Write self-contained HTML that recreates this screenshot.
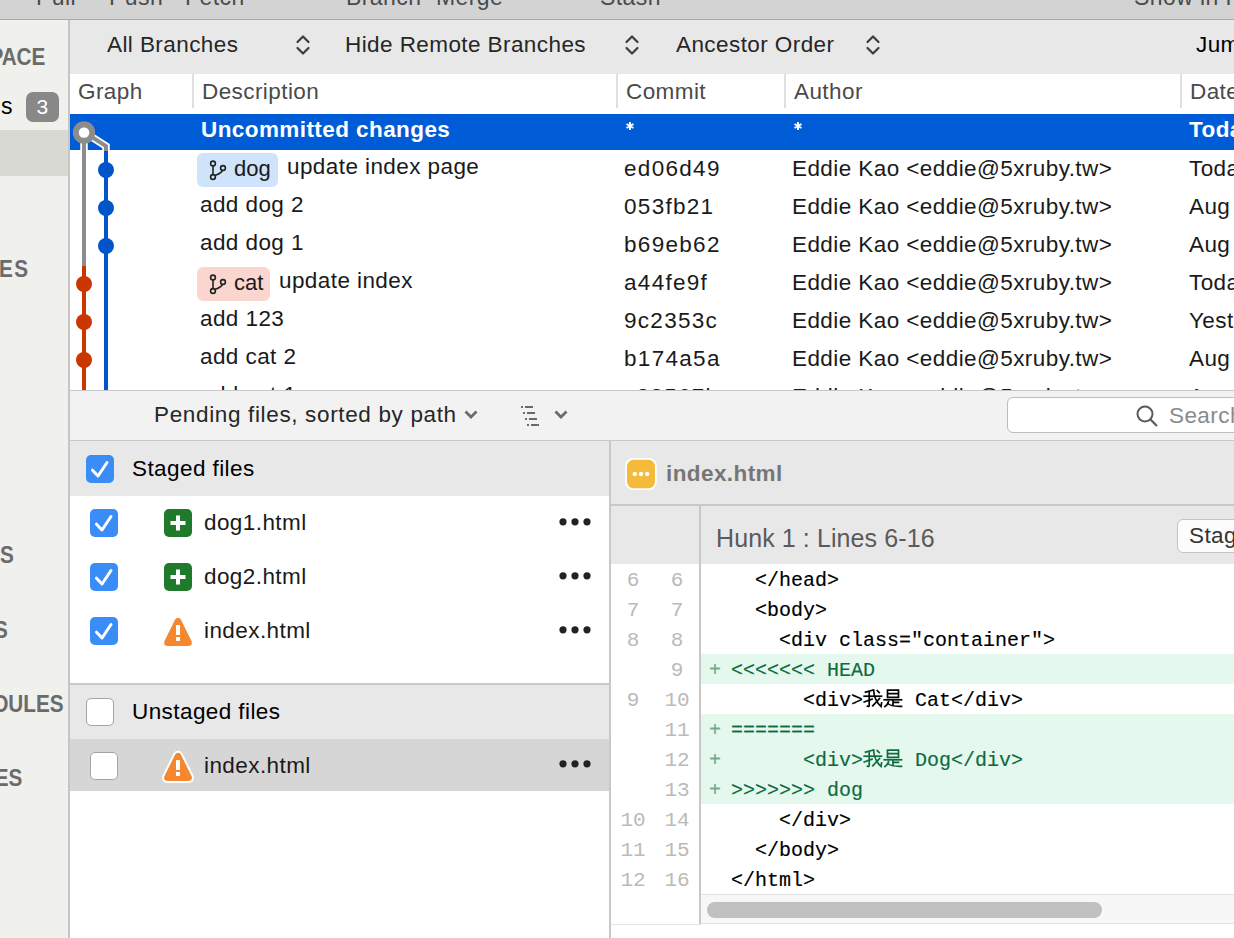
<!DOCTYPE html>
<html><head><meta charset="utf-8">
<style>
*{margin:0;padding:0;box-sizing:border-box}
html,body{width:1234px;height:938px;overflow:hidden;background:#fff}
body{position:relative;font-family:"Liberation Sans",sans-serif;font-size:22.5px;color:#1a1a1a;letter-spacing:0.42px}
.mono{letter-spacing:0}
.code{-webkit-text-stroke:0.15px currentColor}
.a{position:absolute;white-space:pre}
.mono{font-family:"Liberation Mono",monospace}
</style></head><body>

<!-- toolbar -->
<div class="a" style="left:0;top:0;width:1234px;height:19px;background:#d3d3d3"></div>
<div class="a" style="left:0;top:19px;width:1234px;height:1px;background:#a9a9a9"></div>
<div class="a" style="left:0;top:-16px;height:26px;line-height:26px;width:1234px;color:#4b4b4b;font-size:23px">
 <span class="a" style="top:0;left:36px">Pull</span>
 <span class="a" style="top:0;left:109px">Push</span>
 <span class="a" style="top:0;left:185px">Fetch</span>
 <span class="a" style="top:0;left:346px">Branch</span>
 <span class="a" style="top:0;left:436px">Merge</span>
 <span class="a" style="top:0;left:600px">Stash</span>
 <span class="a" style="top:0;left:1134px">Show in Finder</span>
</div>

<!-- sidebar -->
<div class="a" style="left:0;top:20px;width:68px;height:918px;background:#f0f0ed"></div>
<div class="a" style="left:68px;top:20px;width:2px;height:918px;background:#c6c6c6"></div>
<div class="a" style="left:0;top:130px;width:68px;height:46px;background:#d9d9d4"></div>


<!-- sidebar labels -->
<div class="a" style="right:1188.5px;top:43.0px;font-weight:bold;font-size:23px;color:#6b6b6b;line-height:28px;letter-spacing:0;transform:scaleX(0.9);transform-origin:100% 50%">WORKSPACE</div>
<div class="a" style="right:1221px;top:92px;font-size:23px;color:#000;line-height:28px">File Status</div>
<div class="a" style="left:26px;top:92px;width:33px;height:30px;border-radius:7px;background:#888;color:#fff;font-size:21px;line-height:30px;text-align:center">3</div>
<div class="a" style="right:1205.0px;top:254.8px;font-weight:bold;font-size:23px;color:#6b6b6b;line-height:28px;letter-spacing:1.5px;transform:scaleX(0.9);transform-origin:100% 50%">BRANCHES</div>

<!-- filter bar -->
<div class="a" style="left:70px;top:20px;width:1164px;height:54px;background:#e8e8e8"></div>
<div class="a" style="left:107px;top:30px;line-height:30px;color:#262626">All Branches</div>
<div class="a" style="left:345px;top:30px;line-height:30px;color:#262626">Hide Remote Branches</div>
<div class="a" style="left:676px;top:30px;line-height:30px;color:#262626">Ancestor Order</div>
<div class="a" style="left:1196px;top:30px;line-height:30px;color:#000">Jump to:</div>
<svg class="a" style="left:295px;top:33px" width="16" height="24"><path d="M2.5 9 L8 3.5 L13.5 9 M2.5 15 L8 20.5 L13.5 15" fill="none" stroke="#3c3c3c" stroke-width="2.2" stroke-linecap="round" stroke-linejoin="round"/></svg>
<svg class="a" style="left:624px;top:33px" width="16" height="24"><path d="M2.5 9 L8 3.5 L13.5 9 M2.5 15 L8 20.5 L13.5 15" fill="none" stroke="#3c3c3c" stroke-width="2.2" stroke-linecap="round" stroke-linejoin="round"/></svg>
<svg class="a" style="left:865px;top:33px" width="16" height="24"><path d="M2.5 9 L8 3.5 L13.5 9 M2.5 15 L8 20.5 L13.5 15" fill="none" stroke="#3c3c3c" stroke-width="2.2" stroke-linecap="round" stroke-linejoin="round"/></svg>

<!-- table header -->
<div class="a" style="left:70px;top:74px;width:1164px;height:39px;background:#fff"></div>
<div class="a" style="left:78px;top:77px;line-height:30px;color:#4a4a4a">Graph</div>
<div class="a" style="left:202px;top:77px;line-height:30px;color:#4a4a4a">Description</div>
<div class="a" style="left:626px;top:77px;line-height:30px;color:#4a4a4a">Commit</div>
<div class="a" style="left:794px;top:77px;line-height:30px;color:#4a4a4a">Author</div>
<div class="a" style="left:1190px;top:77px;line-height:30px;color:#4a4a4a">Date</div>
<div class="a" style="left:192px;top:74px;width:2px;height:34px;background:#e0e0e0"></div>
<div class="a" style="left:616px;top:74px;width:2px;height:34px;background:#e0e0e0"></div>
<div class="a" style="left:784px;top:74px;width:2px;height:34px;background:#e0e0e0"></div>
<div class="a" style="left:1180px;top:74px;width:2px;height:34px;background:#e0e0e0"></div>

<!-- rows -->
<div class="a" style="left:70px;top:114px;width:1164px;height:36px;background:#005cd6"></div>
<div class="a" style="left:201px;top:116px;line-height:28px;color:#fff;font-weight:bold">Uncommitted changes</div>
<svg class="a" style="left:624px;top:120.2px" width="12" height="12"><g stroke="#fff" stroke-width="1.9" stroke-linecap="butt"><path d="M6 2V10M2.5 4L9.5 8M2.5 8L9.5 4"/></g></svg>
<svg class="a" style="left:792px;top:120.2px" width="12" height="12"><g stroke="#fff" stroke-width="1.9" stroke-linecap="butt"><path d="M6 2V10M2.5 4L9.5 8M2.5 8L9.5 4"/></g></svg>
<div class="a" style="left:1189px;top:116px;line-height:28px;color:#fff;font-weight:bold">Today</div>
<div class="a" style="left:197px;top:153px;width:81px;height:34px;border-radius:6px;background:#cfe3fb"></div>
<svg class="a" style="left:208px;top:159px" width="20" height="22"><g fill="none" stroke="#222" stroke-width="1.6"><circle cx="5" cy="4.5" r="2.4"/><circle cx="5" cy="18" r="2.4"/><circle cx="15" cy="9" r="2.4"/><path d="M5 7 V15.6 M6.8 16.4 C11 15 14 13.5 14.5 11.3"/></g></svg>
<div class="a" style="left:234px;top:155px;line-height:28px;font-size:22px;letter-spacing:0">dog</div>
<div class="a" style="left:287px;top:153px;line-height:28px">update index page</div>
<div class="a" style="left:624px;top:155px;line-height:28px;letter-spacing:1.3px">ed06d49</div>
<div class="a" style="left:792px;top:155px;line-height:28px">Eddie Kao &lt;eddie@5xruby.tw&gt;</div>
<div class="a" style="left:1189px;top:155px;line-height:28px">Today</div>
<div class="a" style="left:200px;top:191px;line-height:28px">add dog 2</div>
<div class="a" style="left:624px;top:193px;line-height:28px;letter-spacing:1.3px">053fb21</div>
<div class="a" style="left:792px;top:193px;line-height:28px">Eddie Kao &lt;eddie@5xruby.tw&gt;</div>
<div class="a" style="left:1189px;top:193px;line-height:28px">Aug 1</div>
<div class="a" style="left:200px;top:229px;line-height:28px">add dog 1</div>
<div class="a" style="left:624px;top:231px;line-height:28px;letter-spacing:1.3px">b69eb62</div>
<div class="a" style="left:792px;top:231px;line-height:28px">Eddie Kao &lt;eddie@5xruby.tw&gt;</div>
<div class="a" style="left:1189px;top:231px;line-height:28px">Aug 1</div>
<div class="a" style="left:197px;top:267px;width:73px;height:34px;border-radius:6px;background:#fbd6cf"></div>
<svg class="a" style="left:208px;top:273px" width="20" height="22"><g fill="none" stroke="#222" stroke-width="1.6"><circle cx="5" cy="4.5" r="2.4"/><circle cx="5" cy="18" r="2.4"/><circle cx="15" cy="9" r="2.4"/><path d="M5 7 V15.6 M6.8 16.4 C11 15 14 13.5 14.5 11.3"/></g></svg>
<div class="a" style="left:234px;top:269px;line-height:28px;font-size:22px;letter-spacing:0">cat</div>
<div class="a" style="left:279px;top:267px;line-height:28px">update index</div>
<div class="a" style="left:624px;top:269px;line-height:28px;letter-spacing:1.3px">a44fe9f</div>
<div class="a" style="left:792px;top:269px;line-height:28px">Eddie Kao &lt;eddie@5xruby.tw&gt;</div>
<div class="a" style="left:1189px;top:269px;line-height:28px">Today</div>
<div class="a" style="left:200px;top:305px;line-height:28px">add 123</div>
<div class="a" style="left:624px;top:307px;line-height:28px;letter-spacing:1.3px">9c2353c</div>
<div class="a" style="left:792px;top:307px;line-height:28px">Eddie Kao &lt;eddie@5xruby.tw&gt;</div>
<div class="a" style="left:1189px;top:307px;line-height:28px">Yesterday</div>
<div class="a" style="left:200px;top:343px;line-height:28px">add cat 2</div>
<div class="a" style="left:624px;top:345px;line-height:28px;letter-spacing:1.3px">b174a5a</div>
<div class="a" style="left:792px;top:345px;line-height:28px">Eddie Kao &lt;eddie@5xruby.tw&gt;</div>
<div class="a" style="left:1189px;top:345px;line-height:28px">Aug 1</div>
<div class="a" style="left:200px;top:381px;line-height:28px">add cat 1</div>
<div class="a" style="left:624px;top:383px;line-height:28px;letter-spacing:1.3px">c23567b</div>
<div class="a" style="left:792px;top:383px;line-height:28px">Eddie Kao &lt;eddie@5xruby.tw&gt;</div>
<div class="a" style="left:1189px;top:383px;line-height:28px">Aug 1</div>

<!-- graph -->
<svg class="a" style="left:70px;top:113px" width="60" height="278" viewBox="70 113 60 278">
 <path d="M84 132 V151" stroke="#fff" stroke-width="7.5" fill="none"/>
 <path d="M84 132 V266" stroke="#8c8c8c" stroke-width="4" fill="none"/>
 <path d="M84 266 V390" stroke="#c93600" stroke-width="4" fill="none"/>
 <path d="M84 132 L106 146 V150" stroke="#fff" stroke-width="7.5" fill="none"/>
 <path d="M84 132 L106 146 V152" stroke="#8c8c8c" stroke-width="4" fill="none"/>
 <path d="M106 151 V390" stroke="#0056c9" stroke-width="4" fill="none"/>
 <rect x="70" y="151" width="60" height="0" fill="#fff"/>
 <circle cx="84" cy="132.5" r="8.2" fill="none" stroke="#8c8c8c" stroke-width="6"/>
 <circle cx="84" cy="132.5" r="5.3" fill="#fff"/>
 <circle cx="106" cy="170" r="8" fill="#0056c9"/>
 <circle cx="106" cy="208" r="8" fill="#0056c9"/>
 <circle cx="106" cy="246" r="8" fill="#0056c9"/>
 <circle cx="84" cy="284" r="8" fill="#c93600"/>
 <circle cx="84" cy="322" r="8" fill="#c93600"/>
 <circle cx="84" cy="360" r="8" fill="#c93600"/>
</svg>

<!-- lower sidebar labels -->
<div class="a" style="right:1220.7px;top:541.2px;font-weight:bold;font-size:23px;color:#6b6b6b;line-height:28px;letter-spacing:0;transform:scaleX(0.9);transform-origin:100% 50%">REMOTES</div>
<div class="a" style="right:1225.6px;top:615.5px;font-weight:bold;font-size:23px;color:#6b6b6b;line-height:28px;letter-spacing:0;transform:scaleX(0.9);transform-origin:100% 50%">STASHES</div>
<div class="a" style="right:1170.9px;top:689.8px;font-weight:bold;font-size:23px;color:#6b6b6b;line-height:28px;letter-spacing:0;transform:scaleX(0.9);transform-origin:100% 50%">SUBMODULES</div>
<div class="a" style="right:1212.1px;top:763.7px;font-weight:bold;font-size:23px;color:#6b6b6b;line-height:28px;letter-spacing:0;transform:scaleX(0.9);transform-origin:100% 50%">SUBTREES</div>

<!-- commit list bottom border + pending bar -->
<div class="a" style="left:70px;top:390px;width:1164px;height:1px;background:#c8c8c8"></div>
<div class="a" style="left:70px;top:391px;width:1164px;height:49px;background:#f2f2f2"></div>
<div class="a" style="left:70px;top:440px;width:1164px;height:1px;background:#c8c8c8"></div>
<div class="a" style="left:154px;top:400px;line-height:30px;color:#262626;letter-spacing:0.65px">Pending files, sorted by path</div>
<svg class="a" style="left:463px;top:405px" width="18" height="18"><path d="M2.5 6.5 L8 12 L13.5 6.5" fill="none" stroke="#6a6a6a" stroke-width="2.8"/></svg>
<svg class="a" style="left:518px;top:400px" width="28" height="30"><g stroke="#6a6a6a" stroke-width="2"><path d="M3 7h2M7 7h8M5 13h2M9 13h8M7 19h2M11 19h8M9 25h2M13 25h8"/></g></svg>
<svg class="a" style="left:553px;top:405px" width="18" height="18"><path d="M2.5 6.5 L8 12 L13.5 6.5" fill="none" stroke="#6a6a6a" stroke-width="2.8"/></svg>
<div class="a" style="left:1007px;top:397px;width:260px;height:36px;border:1px solid #bdbdbd;border-radius:6px;background:#fff"></div>
<svg class="a" style="left:1135px;top:404px" width="26" height="26"><circle cx="10" cy="10" r="7.5" fill="none" stroke="#5a5a5a" stroke-width="2"/><path d="M15.5 15.5 L22 22" stroke="#5a5a5a" stroke-width="2.2"/></svg>
<div class="a" style="left:1169px;top:401px;line-height:30px;color:#8a8a8a">Search</div>

<!-- file list panel -->
<div class="a" style="left:70px;top:441px;width:539px;height:55px;background:#e8e8e8"></div>
<div class="a" style="left:609px;top:441px;width:2px;height:497px;background:#c8c8c8"></div>
<div class="a" style="left:86px;top:455px;width:28px;height:28px;border-radius:5px;background:#3a8cf6"></div>
<svg class="a" style="left:86px;top:455px" width="28" height="28"><path d="M6.5 15.2 L12 21 L21 7.5" fill="none" stroke="#fff" stroke-width="3" stroke-linecap="round" stroke-linejoin="round"/></svg>
<div class="a" style="left:132px;top:454px;line-height:30px;color:#000">Staged files</div>
<div class="a" style="left:90px;top:509px;width:28px;height:28px;border-radius:5px;background:#3a8cf6"></div>
<svg class="a" style="left:90px;top:509px" width="28" height="28"><path d="M6.5 15.2 L12 21 L21 7.5" fill="none" stroke="#fff" stroke-width="3" stroke-linecap="round" stroke-linejoin="round"/></svg>
<svg class="a" style="left:164px;top:509px" width="28" height="28"><rect x="0" y="0" width="28" height="28" rx="5" fill="#1f7a2c"/><path d="M14 6.5V21.5M6.5 14H21.5" stroke="#fff" stroke-width="4"/></svg>
<div class="a" style="left:204px;top:508px;line-height:30px">dog1.html</div>
<svg class="a" style="left:556px;top:515px" width="38" height="14"><circle cx="7" cy="6.8" r="3.6" fill="#222"/><circle cx="19" cy="6.8" r="3.6" fill="#222"/><circle cx="31" cy="6.8" r="3.6" fill="#222"/></svg>
<div class="a" style="left:90px;top:563px;width:28px;height:28px;border-radius:5px;background:#3a8cf6"></div>
<svg class="a" style="left:90px;top:563px" width="28" height="28"><path d="M6.5 15.2 L12 21 L21 7.5" fill="none" stroke="#fff" stroke-width="3" stroke-linecap="round" stroke-linejoin="round"/></svg>
<svg class="a" style="left:164px;top:563px" width="28" height="28"><rect x="0" y="0" width="28" height="28" rx="5" fill="#1f7a2c"/><path d="M14 6.5V21.5M6.5 14H21.5" stroke="#fff" stroke-width="4"/></svg>
<div class="a" style="left:204px;top:562px;line-height:30px">dog2.html</div>
<svg class="a" style="left:556px;top:569px" width="38" height="14"><circle cx="7" cy="6.8" r="3.6" fill="#222"/><circle cx="19" cy="6.8" r="3.6" fill="#222"/><circle cx="31" cy="6.8" r="3.6" fill="#222"/></svg>
<div class="a" style="left:90px;top:617px;width:28px;height:28px;border-radius:5px;background:#3a8cf6"></div>
<svg class="a" style="left:90px;top:617px" width="28" height="28"><path d="M6.5 15.2 L12 21 L21 7.5" fill="none" stroke="#fff" stroke-width="3" stroke-linecap="round" stroke-linejoin="round"/></svg>
<svg class="a" style="left:163px;top:616px" width="30" height="32"><path d="M15 1.8 Q16.9 1.8 18 3.8 L28.6 25.2 Q30 29.9 25.2 29.9 H4.8 Q0 29.9 1.4 25.2 L12 3.8 Q13.1 1.8 15 1.8Z" fill="#f5882e"/><path d="M15 9V19" stroke="#fff" stroke-width="4"/><rect x="13" y="21" width="4" height="4" fill="#fff"/></svg>
<div class="a" style="left:204px;top:616px;line-height:30px">index.html</div>
<svg class="a" style="left:556px;top:623px" width="38" height="14"><circle cx="7" cy="6.8" r="3.6" fill="#222"/><circle cx="19" cy="6.8" r="3.6" fill="#222"/><circle cx="31" cy="6.8" r="3.6" fill="#222"/></svg>

<div class="a" style="left:70px;top:683px;width:539px;height:2px;background:#c8c8c8"></div>
<div class="a" style="left:70px;top:685px;width:539px;height:54px;background:#e8e8e8"></div>
<div class="a" style="left:86px;top:698px;width:28px;height:28px;border-radius:5px;background:#fff;border:1.3px solid #a4a4a4"></div>
<div class="a" style="left:132px;top:697px;line-height:30px;color:#000">Unstaged files</div>
<div class="a" style="left:70px;top:739px;width:539px;height:52px;background:#d6d6d6"></div>
<div class="a" style="left:90px;top:752px;width:28px;height:28px;border-radius:5px;background:#fff;border:1.3px solid #a4a4a4"></div>
<svg class="a" style="left:161px;top:749px" width="34" height="36"><path d="M17 3.8 Q18.9 3.8 20 5.8 L30.6 27.2 Q32 31.9 27.2 31.9 H6.8 Q2 31.9 3.4 27.2 L14 5.8 Q15.1 3.8 17 3.8Z" fill="#f5882e" stroke="#fff" stroke-width="4" stroke-linejoin="round"/><path d="M17 3.8 Q18.9 3.8 20 5.8 L30.6 27.2 Q32 31.9 27.2 31.9 H6.8 Q2 31.9 3.4 27.2 L14 5.8 Q15.1 3.8 17 3.8Z" fill="#f5882e"/><path d="M17 11V21" stroke="#fff" stroke-width="4"/><rect x="15" y="23" width="4" height="4" fill="#fff"/></svg>
<div class="a" style="left:204px;top:751px;line-height:30px">index.html</div>
<svg class="a" style="left:556px;top:757px" width="38" height="14"><circle cx="7" cy="6.8" r="3.6" fill="#222"/><circle cx="19" cy="6.8" r="3.6" fill="#222"/><circle cx="31" cy="6.8" r="3.6" fill="#222"/></svg>

<!-- diff panel -->
<div class="a" style="left:611px;top:441px;width:623px;height:63px;background:#e8e8e8"></div>
<div class="a" style="left:611px;top:504px;width:623px;height:2px;background:#c8c8c8"></div>
<svg class="a" style="left:624px;top:457px" width="36" height="36"><rect x="1.2" y="1" width="31.5" height="32" rx="8" fill="#fff"/><rect x="3" y="2.8" width="28" height="28.4" rx="6.5" fill="#f4ba3b"/><circle cx="10.8" cy="17" r="2.2" fill="#fff"/><circle cx="17" cy="17" r="2.2" fill="#fff"/><circle cx="23.2" cy="17" r="2.2" fill="#fff"/></svg>
<div class="a" style="left:666px;top:459px;line-height:30px;color:#767676;font-weight:bold">index.html</div>
<div class="a" style="left:611px;top:506px;width:623px;height:58px;background:#e8e8e8"></div>
<div class="a" style="left:716px;top:523px;line-height:30px;color:#5a5a5a;font-size:25px;letter-spacing:0.1px">Hunk 1 : Lines 6-16</div>
<div class="a" style="left:1177px;top:519px;width:100px;height:34px;border:1px solid #c3c3c3;border-radius:6px;background:#fcfcfc"></div>
<div class="a" style="left:1189px;top:521px;line-height:30px;color:#333">Stage Hunk</div>
<div class="a" style="left:699px;top:506px;width:2px;height:419px;background:#c8c8c8"></div>
<div class="a mono" style="left:612px;top:566px;width:42px;text-align:center;line-height:30px;font-size:21px;color:#bababa">6</div>
<div class="a mono" style="left:656px;top:566px;width:42px;text-align:center;line-height:30px;font-size:21px;color:#bababa">6</div>
<div class="a mono code" style="left:707px;top:566px;line-height:30px;font-size:20px;color:#000">    &lt;/head&gt;</div>
<div class="a mono" style="left:612px;top:596px;width:42px;text-align:center;line-height:30px;font-size:21px;color:#bababa">7</div>
<div class="a mono" style="left:656px;top:596px;width:42px;text-align:center;line-height:30px;font-size:21px;color:#bababa">7</div>
<div class="a mono code" style="left:707px;top:596px;line-height:30px;font-size:20px;color:#000">    &lt;body&gt;</div>
<div class="a mono" style="left:612px;top:626px;width:42px;text-align:center;line-height:30px;font-size:21px;color:#bababa">8</div>
<div class="a mono" style="left:656px;top:626px;width:42px;text-align:center;line-height:30px;font-size:21px;color:#bababa">8</div>
<div class="a mono code" style="left:707px;top:626px;line-height:30px;font-size:20px;color:#000">      &lt;div class=&quot;container&quot;&gt;</div>
<div class="a" style="left:701px;top:654px;width:533px;height:30px;background:#e4f8ee"></div>
<div class="a mono" style="left:612px;top:656px;width:42px;text-align:center;line-height:30px;font-size:21px;color:#bababa"></div>
<div class="a mono" style="left:656px;top:656px;width:42px;text-align:center;line-height:30px;font-size:21px;color:#bababa">9</div>
<div class="a mono code" style="left:707px;top:656px;line-height:30px;font-size:20px;color:#0e6b3f"><span style="color:#6fa78c;position:relative;left:2px">+</span> &lt;&lt;&lt;&lt;&lt;&lt;&lt; HEAD</div>
<div class="a mono" style="left:612px;top:686px;width:42px;text-align:center;line-height:30px;font-size:21px;color:#bababa">9</div>
<div class="a mono" style="left:656px;top:686px;width:42px;text-align:center;line-height:30px;font-size:21px;color:#bababa">10</div>
<div class="a mono code" style="left:707px;top:686px;line-height:30px;font-size:20px;color:#000">        &lt;div&gt;<svg width="40" height="20" viewBox="0 0 40 20" style="vertical-align:-3px" fill="none" stroke="#000" stroke-width="1.7" stroke-linecap="square"><path d="M9.5 1.2 L2.5 3.2"/><path d="M1.2 7.2 H18.5"/><path d="M6.2 3 V16.5 Q6.2 18 4.5 17.2"/><path d="M1.2 13 L9 10.2"/><path d="M10.6 1 Q11 11 18 17.5 L18.6 14"/><path d="M16.6 9.5 L9.8 16.8"/><path d="M14.2 1.6 L16.2 3.6"/><g transform="translate(20 0)"><path d="M4.5 1.2 H15.5 V8.3 H4.5 Z M4.5 4.7 H15.5"/><path d="M1.2 10.8 H18.5"/><path d="M10 10.8 V16 M10 13.3 H15.5"/><path d="M5.5 12.5 Q5 15.5 2 17.5"/><path d="M4.8 14.5 Q8 17.6 18.5 17.3"/></g></svg> Cat&lt;/div&gt;</div>
<div class="a" style="left:701px;top:714px;width:533px;height:30px;background:#e4f8ee"></div>
<div class="a mono" style="left:612px;top:716px;width:42px;text-align:center;line-height:30px;font-size:21px;color:#bababa"></div>
<div class="a mono" style="left:656px;top:716px;width:42px;text-align:center;line-height:30px;font-size:21px;color:#bababa">11</div>
<div class="a mono code" style="left:707px;top:716px;line-height:30px;font-size:20px;color:#0e6b3f"><span style="color:#6fa78c;position:relative;left:2px">+</span> =======</div>
<div class="a" style="left:701px;top:744px;width:533px;height:30px;background:#e4f8ee"></div>
<div class="a mono" style="left:612px;top:746px;width:42px;text-align:center;line-height:30px;font-size:21px;color:#bababa"></div>
<div class="a mono" style="left:656px;top:746px;width:42px;text-align:center;line-height:30px;font-size:21px;color:#bababa">12</div>
<div class="a mono code" style="left:707px;top:746px;line-height:30px;font-size:20px;color:#0e6b3f"><span style="color:#6fa78c;position:relative;left:2px">+</span>       &lt;div&gt;<svg width="40" height="20" viewBox="0 0 40 20" style="vertical-align:-3px" fill="none" stroke="#0e6b3f" stroke-width="1.7" stroke-linecap="square"><path d="M9.5 1.2 L2.5 3.2"/><path d="M1.2 7.2 H18.5"/><path d="M6.2 3 V16.5 Q6.2 18 4.5 17.2"/><path d="M1.2 13 L9 10.2"/><path d="M10.6 1 Q11 11 18 17.5 L18.6 14"/><path d="M16.6 9.5 L9.8 16.8"/><path d="M14.2 1.6 L16.2 3.6"/><g transform="translate(20 0)"><path d="M4.5 1.2 H15.5 V8.3 H4.5 Z M4.5 4.7 H15.5"/><path d="M1.2 10.8 H18.5"/><path d="M10 10.8 V16 M10 13.3 H15.5"/><path d="M5.5 12.5 Q5 15.5 2 17.5"/><path d="M4.8 14.5 Q8 17.6 18.5 17.3"/></g></svg> Dog&lt;/div&gt;</div>
<div class="a" style="left:701px;top:774px;width:533px;height:30px;background:#e4f8ee"></div>
<div class="a mono" style="left:612px;top:776px;width:42px;text-align:center;line-height:30px;font-size:21px;color:#bababa"></div>
<div class="a mono" style="left:656px;top:776px;width:42px;text-align:center;line-height:30px;font-size:21px;color:#bababa">13</div>
<div class="a mono code" style="left:707px;top:776px;line-height:30px;font-size:20px;color:#0e6b3f"><span style="color:#6fa78c;position:relative;left:2px">+</span> &gt;&gt;&gt;&gt;&gt;&gt;&gt; dog</div>
<div class="a mono" style="left:612px;top:806px;width:42px;text-align:center;line-height:30px;font-size:21px;color:#bababa">10</div>
<div class="a mono" style="left:656px;top:806px;width:42px;text-align:center;line-height:30px;font-size:21px;color:#bababa">14</div>
<div class="a mono code" style="left:707px;top:806px;line-height:30px;font-size:20px;color:#000">      &lt;/div&gt;</div>
<div class="a mono" style="left:612px;top:836px;width:42px;text-align:center;line-height:30px;font-size:21px;color:#bababa">11</div>
<div class="a mono" style="left:656px;top:836px;width:42px;text-align:center;line-height:30px;font-size:21px;color:#bababa">15</div>
<div class="a mono code" style="left:707px;top:836px;line-height:30px;font-size:20px;color:#000">    &lt;/body&gt;</div>
<div class="a mono" style="left:612px;top:866px;width:42px;text-align:center;line-height:30px;font-size:21px;color:#bababa">12</div>
<div class="a mono" style="left:656px;top:866px;width:42px;text-align:center;line-height:30px;font-size:21px;color:#bababa">16</div>
<div class="a mono code" style="left:707px;top:866px;line-height:30px;font-size:20px;color:#000">  &lt;/html&gt;</div>

<div class="a" style="left:701px;top:894px;width:533px;height:30px;background:#f7f7f7;border-top:1px solid #e3e3e3;border-bottom:1px solid #e3e3e3"></div>
<div class="a" style="left:707px;top:902px;width:395px;height:16px;border-radius:8px;background:#c0c0c0"></div>
<div class="a" style="left:611px;top:924px;width:90px;height:1px;background:#e3e3e3"></div>

</body></html>
